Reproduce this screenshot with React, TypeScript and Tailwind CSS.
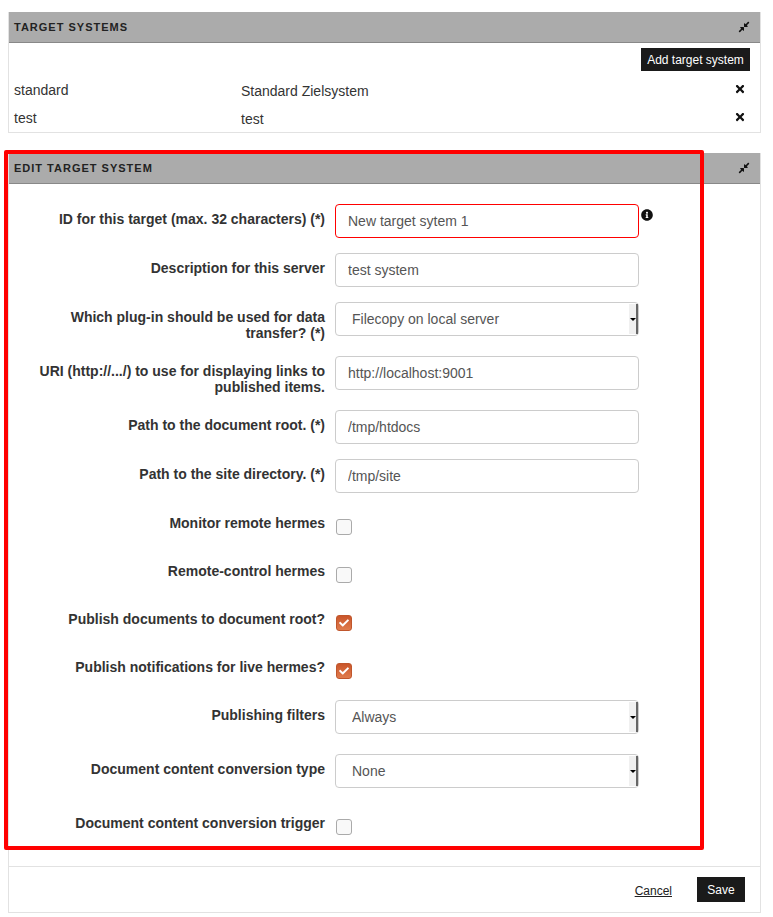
import { FaCheck, FaCompressAlt, FaInfoCircle, FaTimes } from 'react-icons/fa'
import type { ReactNode } from 'react'

const inputClass =
  'h-[34px] w-[304px] rounded border border-[#ccc] bg-white px-3 text-sm text-[#555] outline-none'

function PanelHeader({ title }: { title: string }) {
  return (
    <div className="flex h-[31px] items-center justify-between border-b border-[#888] bg-[#ababab] pl-[5px] pr-[10px]">
      <h2 className="text-[11px] font-bold uppercase tracking-[1px] text-[#222]">{title}</h2>
      <FaCompressAlt className="h-3 w-3 text-[#111]" />
    </div>
  )
}

function Row({ label, height, children }: { label: ReactNode; height: string; children: ReactNode }) {
  return (
    <div className={`flex gap-[10px] ${height}`}>
      <label className="w-[316px] pl-4 pt-[7px] text-right text-sm font-bold leading-4 text-[#333]">{label}</label>
      <div className="relative">{children}</div>
    </div>
  )
}

function SelectBox({ value }: { value: string }) {
  return (
    <div className="relative h-[34px] w-[304px]">
      <select
        defaultValue={value}
        className="h-full w-full appearance-none rounded border border-[#ccc] bg-white pl-4 text-sm text-[#555] outline-none"
      >
        <option>{value}</option>
      </select>
      {/* fake scroll-style arrow button on the right of the select */}
      <span className="absolute bottom-[2px] right-[1px] top-[2px] flex w-[9px] items-center justify-center border-r-2 border-[#666] bg-[#f0f0f0]">
        <span className="h-0 w-0 border-x-[3px] border-t-[3px] border-x-transparent border-t-black" />
      </span>
    </div>
  )
}

function Check({ checked = false }: { checked?: boolean }) {
  return checked ? (
    <span className="ml-px mt-[11px] flex h-4 w-4 items-center justify-center rounded-[3px] border border-[#c0562c] bg-gradient-to-b from-[#c9552a] to-[#e07c4d]">
      <FaCheck className="h-[10px] w-[10px] text-white" />
    </span>
  ) : (
    <span className="ml-px mt-[11px] block h-4 w-4 rounded-[3px] border border-[#aaa] bg-[#f9f9f9]" />
  )
}

export default function App() {
  return (
    <div className="relative h-[917px] bg-white px-2 pt-3 font-['Liberation_Sans',Arial,sans-serif]">
      <section className="w-[753px] border-x border-b border-[#e2e2e2]">
        <PanelHeader title="Target systems" />
        <div className="flex justify-end pr-[10px] pt-[5px]">
          <button className="h-[23px] w-[109px] bg-[#1a1a1a] text-xs text-white">Add target system</button>
        </div>
        <div className="mt-[5px] flex h-[28px] items-center pl-[5px] pr-[14px] text-sm text-[#333]">
          <span className="w-[227px]">standard</span>
          <span className="mt-[2px] flex-1">Standard Zielsystem</span>
          <FaTimes className="mb-[3px] h-3 w-3 text-[#111]" />
        </div>
        <div className="flex h-[28px] items-center pl-[5px] pr-[14px] text-sm text-[#333]">
          <span className="w-[227px]">test</span>
          <span className="mt-[2px] flex-1">test</span>
          <FaTimes className="mb-[3px] h-3 w-3 text-[#111]" />
        </div>
      </section>

      <section className="mt-5 w-[753px] border-x border-b border-[#e2e2e2]">
        <PanelHeader title="Edit target system" />
        <form className="pt-5">
          <Row label="ID for this target (max. 32 characters) (*)" height="h-[49px]">
            <input defaultValue="New target sytem 1" className={`${inputClass} border-[#f00]`} />
            <FaInfoCircle className="absolute left-[306px] top-[5px] h-3 w-3 text-[#111]" />
          </Row>
          <Row label="Description for this server" height="h-[49px]">
            <input defaultValue="test system" className={inputClass} />
          </Row>
          <Row label="Which plug-in should be used for data transfer? (*)" height="h-[54px]">
            <SelectBox value="Filecopy on local server" />
          </Row>
          <Row label="URI (http://.../) to use for displaying links to published items." height="h-[54px]">
            <input defaultValue="http://localhost:9001" className={inputClass} />
          </Row>
          <Row label="Path to the document root. (*)" height="h-[49px]">
            <input defaultValue="/tmp/htdocs" className={inputClass} />
          </Row>
          <Row label="Path to the site directory. (*)" height="h-[49px]">
            <input defaultValue="/tmp/site" className={inputClass} />
          </Row>
          <Row label="Monitor remote hermes" height="h-[48px]">
            <Check />
          </Row>
          <Row label="Remote-control hermes" height="h-[48px]">
            <Check />
          </Row>
          <Row label="Publish documents to document root?" height="h-[48px]">
            <Check checked />
          </Row>
          <Row label="Publish notifications for live hermes?" height="h-[48px]">
            <Check checked />
          </Row>
          <Row label="Publishing filters" height="h-[54px]">
            <SelectBox value="Always" />
          </Row>
          <Row label="Document content conversion type" height="h-[54px]">
            <SelectBox value="None" />
          </Row>
          <Row label="Document content conversion trigger" height="h-[58px]">
            <Check />
          </Row>
        </form>
        <div className="flex h-[46px] items-start justify-end gap-[25px] border-t border-[#e2e2e2] pr-[15px] pt-[10px]">
          <a className="mt-[6px] text-xs text-[#222] underline">Cancel</a>
          <button className="h-[25px] w-[48px] bg-[#1a1a1a] text-xs text-white">Save</button>
        </div>
      </section>

      {/* red annotation frame drawn over the page */}
      <div className="pointer-events-none absolute left-1 top-[150px] h-[700px] w-[700px] rounded-[2px] border-4 border-[#f00]" />
    </div>
  )
}
